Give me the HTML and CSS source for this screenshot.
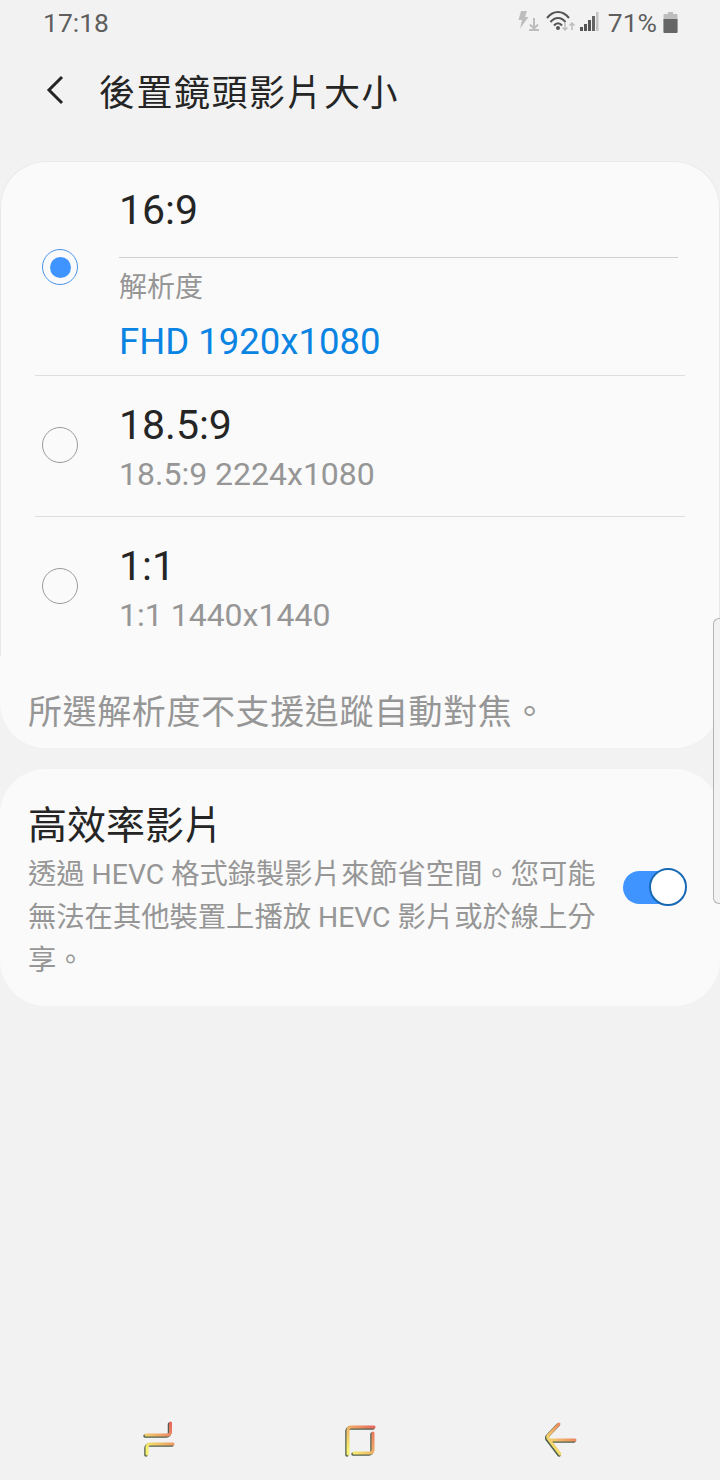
FILE: index.html
```html
<!DOCTYPE html>
<html lang="zh-Hant">
<head>
    <meta charset="utf-8">
    <title>後置鏡頭影片大小</title>
    <link rel="stylesheet" href="styles.css">
</head>
<body>
    <div class="screen">
        <div class="status-bar">
            <span class="clock">17:18</span>
            <div class="status-icons">
                <svg class="icon-flash" width="24" height="26" viewBox="0 0 24 26">
                    <path d="M4 2h6L8 8h3.500L3 19.500 5 11H1.500z" fill="#bdbdbd"/>
                    <path d="M17 9v10M13 15.500l4 4 4-4M12 21h10" fill="none" stroke="#bdbdbd" stroke-width="2"/>
                </svg>
                <svg class="icon-wifi" width="30" height="24" viewBox="0 0 30 24">
                    <path d="M1 8C7.500 0 16.500 0 23 8M4.500 12C9 6.500 15 6.500 19.500 12M8 15.500C10.500 12.500 13.500 12.500 16 15.500" fill="none" stroke="#555" stroke-width="2"/>
                    <circle cx="12" cy="18" r="2" fill="#555"/>
                    <path d="M19 13v7M16.500 17.500l2.500 2.500 2.500-2.500M26 20v-7M23.500 15.500l2.500-2.500 2.500 2.500" fill="none" stroke="#bdbdbd" stroke-width="1.500"/>
                </svg>
                <svg class="icon-signal" width="20" height="22" viewBox="0 0 20 22">
                    <rect x="0" y="16" width="3" height="4" fill="#555"/>
                    <rect x="4" y="13" width="3" height="7" fill="#555"/>
                    <rect x="8" y="9" width="3" height="11" fill="#555"/>
                    <rect x="12" y="5" width="3" height="15" fill="#666"/>
                    <rect x="16" y="1" width="2.500" height="19" fill="#c4c4c4"/>
                </svg>
                <span class="battery-text">71%</span>
                <svg class="icon-battery" width="15" height="21" viewBox="0 0 15 21">
                    <path d="M5 0h5v2h3.500a1 1 0 0 1 1 1v17a1 1 0 0 1-1 1h-12a1 1 0 0 1-1-1V3a1 1 0 0 1 1-1H5z" fill="#bdbdbd"/>
                    <path d="M.500 7h14v13a1 1 0 0 1-1 1h-12a1 1 0 0 1-1-1z" fill="#666"/>
                </svg>
            </div>
        </div>

        <div class="title-bar">
            <svg class="back" width="22" height="32" viewBox="0 0 22 32">
                <path d="M18 3L5 16l13 13" fill="none" stroke="#252525" stroke-width="3"/>
            </svg>
            <h1>後置鏡頭影片大小</h1>
        </div>

        <div class="card card-size">
            <div class="options">
                <div class="option option-first">
                    <span class="radio radio-on"></span>
                    <div class="option-body">
                        <div class="option-title title-first">16:9</div>
                        <div class="section-label">解析度</div>
                        <div class="option-value">FHD 1920x1080</div>
                    </div>
                </div>
                <div class="option">
                    <span class="radio"></span>
                    <div class="option-body">
                        <div class="option-title">18.5:9</div>
                        <div class="option-sub">18.5:9 2224x1080</div>
                    </div>
                </div>
                <div class="option">
                    <span class="radio"></span>
                    <div class="option-body">
                        <div class="option-title">1:1</div>
                        <div class="option-sub">1:1 1440x1440</div>
                    </div>
                </div>
            </div>
            <p class="note">所選解析度不支援追蹤自動對焦。</p>
        </div>

        <div class="card card-hevc">
            <div class="hevc-text">
                <div class="hevc-title">高效率影片</div>
                <p class="hevc-desc">透過 HEVC 格式錄製影片來節省空間。您可能無法在其他裝置上播放 HEVC 影片或於線上分享。</p>
            </div>
            <span class="switch"><span class="knob"></span></span>
        </div>

        <div class="nav-bar">
            <svg width="36" height="36" viewBox="0 0 36 36">
                <defs>
                    <linearGradient id="navGrad" gradientUnits="userSpaceOnUse" x1="8" y1="30" x2="34" y2="4">
                        <stop offset="0" stop-color="#f6f06e"/>
                        <stop offset="1" stop-color="#e85c5c"/>
                    </linearGradient>
                </defs>
                <path class="nav-shadow" d="M27.500 3v9a3 3 0 0 1-3 3H3M30 24H7a3 3 0 0 0-3 3v7"/>
                <path class="nav-line" d="M28.500 2v9a3 3 0 0 1-3 3H4M31 23H8a3 3 0 0 0-3 3v7"/>
            </svg>
            <svg width="36" height="36" viewBox="0 0 36 36">
                <path class="nav-shadow" d="M5 34V10a3 3 0 0 1 3-3h23M30 13v17a3 3 0 0 1-3 3H11"/>
                <path class="nav-line" d="M6 33V9a3 3 0 0 1 3-3h23M31 12v17a3 3 0 0 1-3 3H12"/>
            </svg>
            <svg width="36" height="36" viewBox="0 0 36 36">
                <path class="nav-shadow" d="M16 4L6 14.500a3 3 0 0 0 0 5L17 34M8 20h24"/>
                <path class="nav-line" d="M17 3L7 13.500a3 3 0 0 0 0 5L18 33M9 19h24"/>
            </svg>
        </div>

        <div class="scroll-tab"></div>
    </div>
</body>
</html>
```

FILE: styles.css
```css
* {
    box-sizing: border-box;
}

html, body {
    margin: 0;
    padding: 0;
}

.screen {
    position: relative;
    display: flex;
    flex-direction: column;
    width: 720px;
    height: 1480px;
    overflow: hidden;
    background: #f2f2f2;
    font-family: Roboto, "Noto Sans CJK TC", sans-serif;
}

.status-bar {
    display: flex;
    justify-content: space-between;
    align-items: center;
    height: 44px;
    padding: 0 42px 0 43px;
    color: #5e5e5e;
}

.clock {
    font-size: 26.500px;
}

.status-icons {
    display: flex;
    align-items: center;
}

.icon-flash {
    margin-right: 5px;
}

.icon-wifi {
    margin-right: 4px;
}

.battery-text {
    margin: 0 6px 0 8px;
    font-size: 26.500px;
}

.title-bar {
    display: flex;
    align-items: center;
    height: 96px;
    padding: 0 0 4px 44px;
}

.title-bar h1 {
    margin: 0 0 0 33px;
    font-size: 36px;
    font-weight: 400;
    letter-spacing: 1.500px;
    color: #252525;
}

.card {
    background: #fafafa;
    border-radius: 46px;
}

.card-size {
    margin-top: 21px;
    height: 587px;
}

.options {
    height: 495px;
    padding-top: 1px;
    border: 1px solid #e8e8e8;
    border-bottom: none;
    border-radius: 46px 46px 0 0;
}

.option {
    display: flex;
    align-items: center;
    height: 141px;
    margin: 0 34px;
    border-bottom: 1px solid #dedede;
}

.option-first {
    align-items: flex-start;
    height: 213px;
    padding-top: 24px;
}

.option:last-child {
    border-bottom: none;
}

.radio {
    flex: none;
    width: 36px;
    height: 36px;
    margin: 0 41.500px 2px 6.500px;
    border: 1.500px solid #9a9a9a;
    border-radius: 50%;
    background: #fafafa;
}

.option:last-child .radio {
    margin-bottom: 4px;
}

.radio-on {
    margin-top: 62px;
    padding: 6.500px;
    border-color: #4a94e8;
    background: #3f94ff content-box;
}

.option-body {
    flex: 1;
    margin: 3px -8px 0 0;
}

.option-first .option-body {
    margin: 0 7px 0 0;
}

.option:last-child .option-body {
    margin-top: 1px;
}

.option-title {
    font-size: 41px;
    line-height: 46px;
    color: #252525;
}

.title-first {
    padding-bottom: 24px;
    border-bottom: 1px solid #cfcfcf;
}

.section-label {
    margin-top: 13px;
    font-size: 28px;
    line-height: 34px;
    color: #969696;
}

.option-value {
    margin-top: 17px;
    font-size: 36.500px;
    line-height: 40px;
    color: #0a84e3;
}

.option-sub {
    margin-top: 7px;
    font-size: 32px;
    line-height: 38px;
    color: #969696;
}

.note {
    margin: 36px 0 0 28px;
    font-size: 34px;
    line-height: 40px;
    letter-spacing: 0.600px;
    color: #969696;
}

.card-hevc {
    display: flex;
    align-items: flex-start;
    height: 237px;
    margin-top: 21px;
    padding: 35px 33px 0 28px;
}

.hevc-text {
    width: 570px;
}

.hevc-title {
    font-size: 39px;
    line-height: 44px;
    color: #252525;
}

.hevc-desc {
    margin: 4.500px 0 0;
    font-size: 28.300px;
    line-height: 43px;
    color: #969696;
}

.switch {
    position: relative;
    flex: none;
    width: 62px;
    height: 33px;
    margin: 67px 0 0 25px;
    border-radius: 17px;
    background: #3f94ff;
}

.knob {
    position: absolute;
    top: -3px;
    right: -2px;
    width: 38px;
    height: 38px;
    border: 2px solid #1769b5;
    border-radius: 50%;
    background: #fff;
}

.nav-bar {
    display: flex;
    justify-content: space-between;
    margin-top: auto;
    padding: 0 142px 23px;
}

.nav-bar svg {
    display: block;
    filter: blur(0.400px);
}

.nav-line,
.nav-shadow {
    fill: none;
    stroke-width: 3;
    stroke-linecap: round;
}

.nav-line {
    stroke: url(#navGrad);
}

.nav-shadow {
    stroke: #4f5f4c;
    stroke-width: 3.500;
}

.scroll-tab {
    position: absolute;
    top: 618px;
    right: 0;
    width: 7px;
    height: 286px;
    border: 1.500px solid #b4b4b4;
    border-right: none;
    border-radius: 6px 0 0 6px;
    background: #f2f2f2;
}
```
